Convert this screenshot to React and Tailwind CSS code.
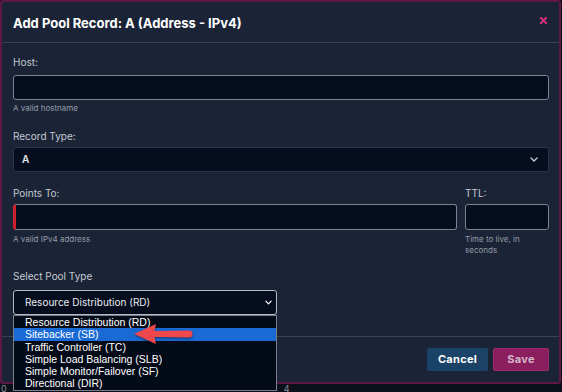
import React from "react";

function Chevron({ className }) {
  return (
    <svg className={className} viewBox="0 0 8 5" fill="none">
      <path d="M1 1 L4 4 L7 1" stroke="currentColor" strokeWidth="1.4" strokeLinecap="round" strokeLinejoin="round" />
    </svg>
  );
}

const options = [
  "Resource Distribution (RD)",
  "Sitebacker (SB)",
  "Traffic Controller (TC)",
  "Simple Load Balancing (SLB)",
  "Simple Monitor/Failover (SF)",
  "Directional (DIR)",
];

export default function App() {
  return (
    <div className="w-[562px] h-[392px] overflow-hidden bg-[#0b101b] font-['Inter',sans-serif]">
      <div className="w-[561px] h-[384px] border-2 border-[#5c1843] rounded-[3px] bg-[#1b2437] flex flex-col">
        {/* header */}
        <div className="h-[41px] shrink-0 border-b border-[#3a4354] flex items-center justify-between pl-[11px] pr-[10px]">
          <h1 className="text-[13px] font-bold text-white leading-none pt-[2px]">Add Pool Record: A (Address - IPv4)</h1>
          <svg className="w-[7px] h-[7px] mr-[2px] mb-[4px]" viewBox="0 0 8 8">
            <path d="M1 1 L7 7 M7 1 L1 7" stroke="#e6307f" strokeWidth="2.2" strokeLinecap="round" />
          </svg>
        </div>

        {/* body */}
        <div className="flex-1 pl-[11px] pr-[10px]">
          <label className="block mt-[12px] text-[10px] leading-[14px] text-[#c3c8d0]">Host:</label>
          <div className="mt-[6px] h-[25px] rounded-[3px] border border-[#7d8390] bg-[#050d1e]"></div>
          <div className="mt-[3px] text-[8px] leading-[11px] text-[#959ba6]">A valid hostname</div>

          <label className="block mt-[15px] text-[10px] leading-[14px] text-[#c3c8d0]">Record Type:</label>
          <div className="mt-[4px] h-[25px] rounded-[3px] border border-[#2c3546] bg-[#050d1e] flex items-center justify-between pl-[8px] pr-[10px]">
            <span className="text-[10px] font-semibold text-[#e6e8ec]">A</span>
            <Chevron className="w-[8px] h-[5px] text-[#c9ccd2]" />
          </div>

          <div className="mt-[14px] flex gap-[8px]">
            <div className="flex-1">
              <label className="block text-[10px] leading-[14px] text-[#c3c8d0]">Points To:</label>
              <div className="mt-[4px] h-[26px] rounded-[3px] border border-[#7d8390] border-l-[3px] border-l-[#d01f2c] bg-[#050d1e]"></div>
              <div className="mt-[4px] text-[8px] leading-[11px] text-[#959ba6]">A valid IPv4 address</div>
            </div>
            <div className="w-[84px]">
              <label className="block text-[10px] leading-[14px] text-[#c3c8d0]">TTL:</label>
              <div className="mt-[4px] h-[26px] rounded-[3px] border border-[#7d8390] bg-[#050d1e]"></div>
              <div className="mt-[4px] text-[8px] leading-[11px] text-[#959ba6]">Time to live, in<br />seconds</div>
            </div>
          </div>

          <label className="block mt-[13px] text-[10px] leading-[14px] text-[#c3c8d0]">Select Pool Type</label>
          <div className="relative mt-[7px] w-[264px]">
            <div className="h-[25px] rounded-[3px] border border-[#b4b8c0] bg-[#050d1e] flex items-center justify-between pl-[11px] pr-[4px]">
              <span className="text-[10px] text-[#ececee]">Resource Distribution (RD)</span>
              <Chevron className="w-[7px] h-[5px] text-white" />
            </div>
            <div className="absolute left-0 top-full w-[264px] border border-[#7a7f88] bg-[#030a18] font-['Liberation_Sans',Arial,sans-serif] text-[10.5px] text-white z-10">
              {options.map((o, i) => (
                <div key={o} className={"h-[12.3px] leading-[12.3px] pl-[11px] whitespace-nowrap " + (i === 1 ? "bg-[#1a6ad6]" : "")}>
                  {o}
                </div>
              ))}
              <svg className="absolute left-[120px] top-[7px] w-[60px] h-[22px] drop-shadow-[0_1px_1px_rgba(0,0,0,0.5)]" viewBox="0 0 60 22">
                <path d="M0 11 L22 1 L20.5 8 L55 7.5 Q58.5 7.5 58.5 11 Q58.5 14.5 55 14.5 L20.5 14 L22 21 Z" fill="#ee474c" />
              </svg>
            </div>
          </div>
        </div>

        {/* footer */}
        <div className="h-[46px] shrink-0 border-t border-[#3a4350] flex items-center justify-end gap-[5px] pr-[10px]">
          <button className="h-[23px] w-[61px] rounded-[2px] bg-[#1b4267] text-[11px] font-bold text-white tracking-[0.3px]">Cancel</button>
          <button className="h-[23px] w-[56px] rounded-[2px] bg-[#8b1e5e] border border-[#9c2a6c] text-[11px] font-bold text-[#d4b6c8] tracking-[0.3px]">Save</button>
        </div>
      </div>
      <div className="flex text-[9px] leading-[10px] text-[#8b9099]">
        <span className="ml-[1px]">0</span>
        <span className="ml-[277px]">4</span>
      </div>
    </div>
  );
}
